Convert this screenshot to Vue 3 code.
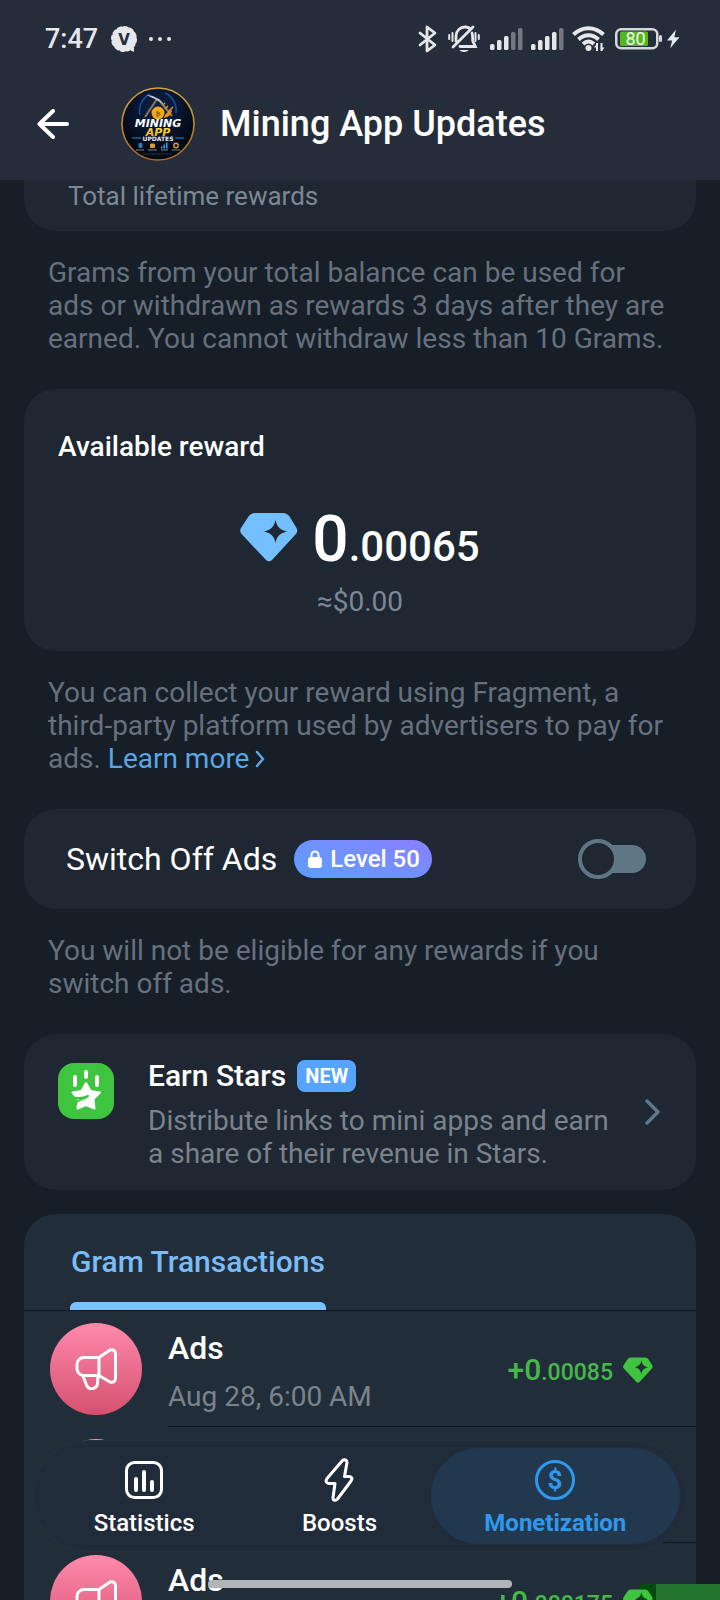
<script setup>
import { ref } from 'vue'

const activeTab = ref('monetization')
const adsOff = ref(false)

const signals = [
  { id: 'sim1', level: 3 },
  { id: 'sim2', level: 4 }
]

const transactions = [
  { id: 1, title: 'Ads', date: 'Aug 28, 6:00 AM', whole: '+0', fraction: '.00085' },
  { id: 2 },
  { id: 3, title: 'Ads', whole: '+0', fraction: '.000175' }
]

const tabs = [
  { id: 'statistics', label: 'Statistics' },
  { id: 'boosts', label: 'Boosts' },
  { id: 'monetization', label: 'Monetization' }
]
</script>

<template>
  <div class="app">
    <header class="header">
      <div class="status-bar">
        <span class="time">7:47</span>
        <svg class="badge-icon" width="28" height="28" viewBox="0 0 28 28">
          <circle cx="14" cy="14" r="11" fill="#e6e7ec" />
          <circle cx="14" cy="14" r="11" fill="none" stroke="#e6e7ec" stroke-width="4" stroke-dasharray="2.5 3.26" stroke-linecap="round" />
          <path d="M16 23h8v4z" fill="#e6e7ec" />
          <text x="14" y="19.5" text-anchor="middle" font-family="DejaVu Sans" font-weight="bold" font-size="15" fill="#252d3a">V</text>
        </svg>
        <svg width="24" height="6" viewBox="0 0 24 6" fill="#e6e7ec">
          <circle cx="3" cy="3" r="2" />
          <circle cx="12" cy="3" r="2" />
          <circle cx="21" cy="3" r="2" />
        </svg>
        <div class="status-icons">
          <svg width="20" height="28" viewBox="0 0 20 28" fill="none" stroke="#e6e7ec" stroke-width="2.8" stroke-linejoin="round" stroke-linecap="round">
            <path d="M2 8l15 12-8 6V2l8 6L2 20" />
          </svg>
          <svg class="bell" width="32" height="28" viewBox="0 0 32 28" fill="none" stroke="#e6e7ec" stroke-width="2.8" stroke-linecap="round">
            <path d="M5 22L25 2M8 16v-5c0-5 4-9 9-9 2 0 3 .5 4.500 1.200M24 8c.8 2 .6 6 .8 8l2.500 5.500H12" />
            <path d="M11.500 25h9c-1 2.500-8 2.500-9 0z" fill="#e6e7ec" stroke="none" />
            <path d="M1.200 10v4M4.500 8v8M27.500 8v8M30.800 10v4" stroke-width="2" />
          </svg>
          <svg v-for="signal in signals" :key="signal.id" class="signal" width="33" height="22" viewBox="0 0 33 22">
            <rect
              v-for="bar in 5"
              :key="bar"
              :x="(bar - 1) * 7"
              :y="20 - bar * 4"
              width="4.500"
              :height="2 + bar * 4"
              rx="1.500"
              :fill="bar <= signal.level ? '#e6e7ec' : '#737781'"
            />
          </svg>
          <svg width="34" height="28" viewBox="0 0 34 28" fill="none" stroke="#e6e7ec" stroke-width="4">
            <path d="M1.500 9.500c9-8.300 21-8.300 30 0M6.500 14.500c6-5.600 14-5.600 20 0M11 19c4-3.400 7-3.400 11 0" />
            <circle cx="16.500" cy="23" r="3" fill="#e6e7ec" stroke="none" />
            <path d="M25 18v8M29.500 18v8" stroke-width="2" />
            <path d="M22 22.500l3-4 1 4zM28.500 22.500h4l-3 4z" fill="#e6e7ec" stroke="none" />
          </svg>
          <svg class="battery" width="47" height="22" viewBox="0 0 47 22">
            <rect x="1.250" y="1.250" width="41" height="19" rx="5" fill="none" stroke="#d5d7dc" stroke-width="2.500" />
            <rect x="5" y="3.500" width="28" height="14.500" rx="1.500" fill="#56b51e" />
            <rect x="44" y="7" width="3" height="7" rx="1.500" fill="#d5d7dc" />
            <text x="20.500" y="17" text-anchor="middle" font-family="Roboto" font-weight="400" font-size="18" fill="#f2f6ee">80</text>
          </svg>
          <svg width="13" height="20" viewBox="0 0 14 20">
            <path d="M9.500 0L0 11.500h5.500L3.500 20 13.500 8H8z" fill="#e6e7ec" />
          </svg>
        </div>
      </div>

      <div class="title-bar">
        <button class="back-btn" aria-label="Back">
          <svg width="32" height="30" viewBox="0 0 32 30" fill="none" stroke="#fff" stroke-width="4" stroke-linecap="round" stroke-linejoin="round">
            <path d="M16 2L2.500 15 16 28M2.500 15H30" />
          </svg>
        </button>
        <svg class="avatar" width="74" height="74" viewBox="0 0 74 74">
          <defs>
            <radialGradient id="avatarBg" cx="50%" cy="30%" r="60%">
              <stop offset="0" stop-color="#0d2450" />
              <stop offset="1" stop-color="#03070f" />
            </radialGradient>
            <linearGradient id="avatarRing" x1="0" y1="0" x2="0" y2="1">
              <stop offset="0" stop-color="#d2a736" />
              <stop offset="1" stop-color="#a8682a" />
            </linearGradient>
            <linearGradient id="gold" x1="0" y1="0" x2="0" y2="1">
              <stop offset="0" stop-color="#ffe23e" />
              <stop offset="1" stop-color="#f0a11a" />
            </linearGradient>
          </defs>
          <circle cx="37" cy="37" r="36" fill="url(#avatarBg)" stroke="url(#avatarRing)" stroke-width="1.600" />
          <path d="M19 28A19 19 0 0 1 29 7M44 6a19 19 0 0 1 11 20" fill="none" stroke="#17519c" stroke-width="1.500" />
          <path d="M24 30L36 12M37 12l14 17" stroke="#8b7355" stroke-width="2.200" />
          <path d="M25 8c6 0 14 3 18 10-6-5-11-7-18-10z" fill="#c4cad2" />
          <path d="M44 22l3-3M47 25l5-5M42 18l2-2" stroke="#d99828" stroke-width="1.500" />
          <circle cx="37" cy="26" r="6.500" fill="#f4a91d" />
          <path d="M43 31c1-5 4-6 8-8-1 5-3 7-8 8z" fill="#e8931b" />
          <text x="37" y="29" text-anchor="middle" font-family="DejaVu Sans" font-weight="bold" font-size="7" fill="#8f540c">₿</text>
          <path d="M11 51h9M54 51h9" stroke="#164a7c" stroke-width="2" />
          <g text-anchor="middle" font-family="DejaVu Sans" font-weight="bold" font-style="italic">
            <text x="37" y="40" font-size="11" fill="#fff">MINING</text>
            <text x="37" y="49" font-size="11" fill="url(#gold)">APP</text>
          </g>
          <text x="37" y="54" text-anchor="middle" font-family="DejaVu Sans" font-weight="bold" font-size="6" fill="#e9edf2">UPDATES</text>
          <rect x="17.500" y="56" width="4" height="5" rx="1" fill="#2b7bbd" />
          <rect x="29" y="56.500" width="5" height="4.500" rx="1" fill="#d9a025" />
          <path d="M40 61.500v-2h1.500v2zM42.500 61.500v-4H44v4zM45 61.500v-6h1.500v6z" fill="#3aa0ea" />
          <circle cx="55" cy="58.500" r="2.200" fill="none" stroke="#d9a025" stroke-width="1.400" />
          <path d="M15 63h8M27 63h9M40 63h7M51 63h8" stroke="#9aa7b5" stroke-width=".8" />
          <path d="M22 67h30" stroke="#1c4b78" stroke-width="1" stroke-dasharray="2 1" />
        </svg>
        <h1 class="title">Mining App Updates</h1>
      </div>
    </header>

    <main class="content">
      <section class="card lifetime-card">Total lifetime rewards</section>
      <p class="note">
        Grams from your total balance can be used for ads or withdrawn as rewards 3 days after they are earned. You cannot withdraw less than 10 Grams.
      </p>

      <section class="card reward-card">
        <h2 class="reward-title">Available reward</h2>
        <div class="reward-amount">
          <svg class="reward-gem" width="58" height="50" viewBox="0 0 58 50">
            <path fill="#74bffd" fill-rule="evenodd" d="M15 1h28q4 0 6.500 3.500l7 11.500q2 3.500-1 6.500L32 48q-3 2.500-6 0L2 22.500q-3-3-1-6.500L8.500 4.500Q11 1 15 1zM35.500 8c-1.500 7-4.500 10-11.500 11.500 7 1.500 10 4.500 11.500 11.500 1.500-7 4.500-10 11.500-11.500C40 18 37 15 35.500 8z" />
          </svg>
          <div class="reward-value"><span class="whole">0</span><span>.00065</span></div>
        </div>
        <div class="reward-usd">≈$0.00</div>
      </section>
      <p class="note">
        You can collect your reward using Fragment, a third-party platform used by advertisers to pay for ads.
        <a class="learn-more" href="#">Learn more<svg width="10" height="18" viewBox="0 0 10 18" fill="none" stroke="#5ba7e3" stroke-width="2.500" stroke-linecap="round" stroke-linejoin="round"><path d="M2 2l6 7-6 7" /></svg></a>
      </p>

      <section class="card switch-card">
        <label class="switch-label" for="switch_off_ads">Switch Off Ads</label>
        <span class="level">
          <svg width="14" height="18" viewBox="0 0 14 18">
            <rect x="0" y="7" width="14" height="11" rx="3" fill="#fff" />
            <path d="M3.500 8V5a3.500 3.500 0 0 1 7 0v3" fill="none" stroke="#fff" stroke-width="2" />
          </svg>
          Level 50
        </span>
        <input id="switch_off_ads" v-model="adsOff" class="switch" type="checkbox" />
      </section>
      <p class="note">You will not be eligible for any rewards if you switch off ads.</p>

      <section class="card earn-card">
        <svg class="earn-icon" width="56" height="56" viewBox="0 0 56 56">
          <rect width="56" height="56" rx="16" fill="#3fc43f" />
          <path d="M17 14v8M28 9v5M39 14v8" stroke="#fff" stroke-width="4" stroke-linecap="round" />
          <path d="M28 20l4.500 8 9.500 1.500-6.500 6.500 1 9.500-8.500-3.500-8.500 3.500q0-5 2.500-7.500l-7.500-8.500 9-1.500z" fill="#fff" stroke="#fff" stroke-width="2" stroke-linejoin="round" />
          <path d="M15 34.500c5 1 11 .5 15-1.500-3 3-8 3-11 5.500" fill="none" stroke="#3fc43f" stroke-width="2" stroke-linecap="round" stroke-linejoin="round" />
        </svg>
        <div class="earn-body">
          <div class="earn-head">
            <h2 class="earn-title">Earn Stars</h2>
            <span class="new-badge">NEW</span>
          </div>
          <p class="earn-text">Distribute links to mini apps and earn a share of their revenue in Stars.</p>
        </div>
        <svg class="earn-arrow" width="16" height="26" viewBox="0 0 16 26" fill="none" stroke="#5f7789" stroke-width="3.500" stroke-linecap="round" stroke-linejoin="round">
          <path d="M2 2l11 11L2 24" />
        </svg>
      </section>

      <section class="transactions">
        <div class="tx-tabs">
          <button class="tx-tab">Gram Transactions</button>
        </div>
        <div v-for="tx in transactions" :key="tx.id" class="tx-row">
          <div class="tx-icon">
            <svg width="42" height="42" viewBox="0 0 42 42" fill="none" stroke="#fff" stroke-width="3" stroke-linejoin="round" stroke-linecap="round">
              <path d="M24 9.500H9a7 7 0 0 0-7 7v4a7 7 0 0 0 7 7h15zM24 9.500l11-7.500q5.500-1 5.500 4v24q0 5-5.500 4L24 27.500M8 28l3.500 9c2.500 6 11.500 4 11-2.500l.500-7" />
            </svg>
          </div>
          <div class="tx-body">
            <div class="tx-info">
              <div class="tx-title">{{ tx.title }}</div>
              <div class="tx-date">{{ tx.date }}</div>
            </div>
            <div v-if="tx.whole" class="tx-amount">
              <span><span class="tx-whole">{{ tx.whole }}</span>{{ tx.fraction }}</span>
              <svg class="tx-gem" width="30" height="26" viewBox="0 0 58 50">
                <path fill="#3fc43f" fill-rule="evenodd" d="M15 1h28q4 0 6.500 3.500l7 11.500q2 3.500-1 6.500L32 48q-3 2.500-6 0L2 22.500q-3-3-1-6.500L8.500 4.500Q11 1 15 1zM35.500 6c-1.500 8-5 11.500-12.500 13.500 7.500 2 11 5.500 12.500 13.500 1.500-8 5-11.500 12.500-13.500C40.500 17.500 37 14 35.500 6z" />
              </svg>
            </div>
          </div>
        </div>
      </section>
    </main>

    <nav class="bottom-nav">
      <button
        v-for="tab in tabs"
        :key="tab.id"
        class="nav-btn"
        :class="{ active: activeTab === tab.id }"
        @click="activeTab = tab.id"
      >
        <svg v-if="tab.id === 'statistics'" width="44" height="44" viewBox="0 0 44 44" fill="none" stroke="currentColor" stroke-linecap="round">
          <rect x="4.500" y="4.500" width="35" height="35" rx="8" stroke-width="3" />
          <path d="M14 21v11M22 14v18M30 24v8" stroke-width="4" />
        </svg>
        <svg v-else-if="tab.id === 'boosts'" width="44" height="44" viewBox="0 0 44 44" fill="none" stroke="currentColor" stroke-width="3" stroke-linejoin="round">
          <path d="M25.500 2.500L10 20.500q-2.500 4 2 5h6l-2 14c0 3.500 2.500 3.500 4.500 1.500L34 23q2.500-4-2-4.500h-4.500l2.500-14c0-2.500-2.500-3.500-4.500-2z" />
        </svg>
        <svg v-else width="44" height="44" viewBox="0 0 44 44">
          <circle cx="22" cy="22" r="18.500" fill="none" stroke="currentColor" stroke-width="3" />
          <text x="22" y="31" text-anchor="middle" font-family="Roboto" font-weight="700" font-size="26" fill="currentColor">$</text>
        </svg>
        <span>{{ tab.label }}</span>
      </button>
    </nav>

    <div class="corner-mark"></div>
    <div class="home-indicator"></div>
  </div>
</template>

<style>
body {
  margin: 0;
  background-color: #161e27;
}
</style>

<style scoped>
.app {
  position: relative;
  display: flex;
  flex-direction: column;
  height: 100vh;
  overflow: hidden;
  background-color: #161e27;
  color: #fff;
  font-family: Roboto, "Liberation Sans", sans-serif;
}

svg {
  display: block;
  flex-shrink: 0;
}

h1, h2, p {
  margin: 0;
  font-weight: 500;
}

button {
  padding: 0;
  border: none;
  background: none;
  color: inherit;
  font-family: inherit;
  cursor: pointer;
}

.header {
  flex-shrink: 0;
  height: 180px;
  background-color: #262d3a;
}

.status-bar {
  display: flex;
  align-items: center;
  height: 68px;
  padding: 10px 40px 0 45px;
  box-sizing: border-box;
}

.time {
  font-size: 27px;
  font-weight: 500;
  line-height: 32px;
  color: #e6e7ec;
}

.badge-icon {
  margin: 0 10px 0 12px;
}

.status-icons {
  display: flex;
  align-items: center;
  margin-left: auto;
}

.bell {
  margin: 0 10px;
}

.signal {
  margin-right: 8px;
}

.battery {
  margin: 0 5px 0 9px;
}

.title-bar {
  display: flex;
  align-items: center;
  height: 112px;
  padding-left: 37px;
}

.avatar {
  margin: 0 25px 0 52px;
}

.title {
  font-size: 36px;
  line-height: 40px;
}

.content {
  flex: 1;
  min-height: 0;
  padding: 0 24px;
  overflow: hidden;
}

.card {
  border-radius: 32px;
  background-color: #1e2732;
}

.lifetime-card {
  padding: 1px 44px 19px;
  border-radius: 0 0 32px 32px;
  font-size: 26px;
  line-height: 31px;
  color: #7c8894;
}

.note {
  padding: 25px 24px 34px;
  font-size: 28px;
  font-weight: 400;
  line-height: 33px;
  color: #67717e;
}

.learn-more {
  color: #5ba7e3;
  text-decoration: none;
}

.learn-more svg {
  display: inline-block;
  margin-left: 6px;
}

.reward-card {
  padding: 41px 34px 33px;
}

.reward-title {
  font-size: 28px;
  line-height: 33px;
}

.reward-amount {
  display: flex;
  justify-content: center;
  align-items: center;
  gap: 14px;
  height: 72px;
  margin-top: 41px;
}

.reward-gem {
  margin-bottom: 6px;
}

.reward-value {
  display: flex;
  align-items: baseline;
  font-size: 42px;
  font-weight: 500;
  line-height: 50px;
}

.whole {
  font-size: 64px;
  line-height: 72px;
}

.reward-usd {
  margin-top: 9px;
  font-size: 28px;
  line-height: 33px;
  text-align: center;
  color: #7c8894;
}

.switch-card {
  display: flex;
  align-items: center;
  height: 100px;
  padding: 0 50px 0 42px;
}

.switch-label {
  font-size: 32px;
  line-height: 40px;
}

.level {
  display: flex;
  align-items: center;
  gap: 8px;
  height: 38px;
  margin-left: 17px;
  padding: 0 12px 0 14px;
  border-radius: 19px;
  background: linear-gradient(20deg, #5aa0ff, #8a7fff);
  font-size: 24px;
  font-weight: 500;
}

.switch {
  position: relative;
  width: 68px;
  height: 40px;
  margin: 0 0 0 auto;
  appearance: none;
  cursor: pointer;
}

.switch::before {
  content: '';
  position: absolute;
  inset: 6px 0 6px 10px;
  border-radius: 14px;
  background-color: #5f7685;
}

.switch::after {
  content: '';
  position: absolute;
  left: 0;
  top: 0;
  width: 40px;
  height: 40px;
  box-sizing: border-box;
  border: 4px solid #5f7685;
  border-radius: 50%;
  background-color: #1e2732;
}

.switch:checked::after {
  left: 28px;
}

.earn-card {
  display: flex;
  padding: 26px 35px 20px 34px;
}

.earn-icon {
  margin: 3px 34px 0 0;
}

.earn-body {
  flex: 1;
}

.earn-head {
  display: flex;
  align-items: center;
  gap: 11px;
}

.earn-title {
  font-size: 30px;
  line-height: 32px;
}

.new-badge {
  padding: 0 8px;
  border-radius: 8px;
  background-color: #57a4ff;
  font-size: 20px;
  font-weight: 700;
  line-height: 32px;
}

.earn-text {
  margin-top: 12px;
  font-size: 28px;
  font-weight: 400;
  line-height: 33px;
  color: #7a838b;
}

.earn-arrow {
  align-self: center;
  margin: 0 0 6px 24px;
}

.transactions {
  margin-top: 24px;
  border-radius: 32px 32px 0 0;
  background-color: #222d3a;
}

.tx-tabs {
  display: flex;
  height: 96px;
  padding: 0 46px;
  border-bottom: 1px solid #10151c;
}

.tx-tab {
  position: relative;
  padding: 0 1px;
  font-size: 30px;
  font-weight: 500;
  line-height: 36px;
  color: #7abcf5;
}

.tx-tab::after {
  content: '';
  position: absolute;
  left: 0;
  right: 0;
  bottom: 0;
  height: 8px;
  border-radius: 6px 6px 0 0;
  background-color: #7ac3ff;
}

.tx-row {
  display: flex;
  gap: 26px;
  height: 116px;
  padding-left: 26px;
}

.tx-icon {
  display: flex;
  justify-content: center;
  align-items: center;
  width: 92px;
  height: 92px;
  margin-top: 12px;
  border-radius: 50%;
  background: linear-gradient(#ff8aac, #d5506f);
}

.tx-body {
  display: flex;
  flex: 1;
  justify-content: space-between;
  align-items: center;
  padding: 5px 43px 0 0;
  border-bottom: 1px solid #10151c;
}

.tx-info {
  display: grid;
  grid-template-rows: 36px 33px;
  gap: 14px;
}

.tx-title {
  font-size: 32px;
  font-weight: 500;
  line-height: 36px;
}

.tx-date {
  font-size: 28px;
  line-height: 33px;
  color: #7a838b;
}

.tx-amount {
  display: flex;
  align-items: center;
  gap: 10px;
  font-size: 23px;
  font-weight: 500;
  line-height: 36px;
  color: #45b84a;
}

.tx-whole {
  font-size: 30px;
}

.tx-gem {
  position: relative;
  z-index: 2;
  margin-bottom: 3px;
}

.bottom-nav {
  position: absolute;
  left: 32px;
  right: 32px;
  bottom: 48px;
  z-index: 3;
  display: flex;
  height: 112px;
  padding: 7px;
  box-sizing: border-box;
  border: 1px solid #273440;
  border-radius: 56px;
  background-color: #212c3b;
}

.nav-btn {
  display: flex;
  flex: 1 1 auto;
  flex-direction: column;
  align-items: center;
  gap: 7px;
  padding-top: 10px;
  border-radius: 48px;
  font-size: 24px;
  font-weight: 500;
  line-height: 28px;
}

.nav-btn.active {
  background-color: #22384f;
  font-weight: 700;
  color: #2f98ea;
}

.home-indicator {
  position: absolute;
  left: 50%;
  bottom: 12px;
  z-index: 3;
  width: 304px;
  height: 8px;
  border-radius: 4px;
  background-color: #b1b5ba;
  transform: translateX(-50%);
}

.corner-mark {
  position: absolute;
  right: 0;
  bottom: 0;
  z-index: 1;
  width: 80px;
  height: 16px;
  background: linear-gradient(90deg, #024b0c 16px, #23742f 16px);
}
</style>
